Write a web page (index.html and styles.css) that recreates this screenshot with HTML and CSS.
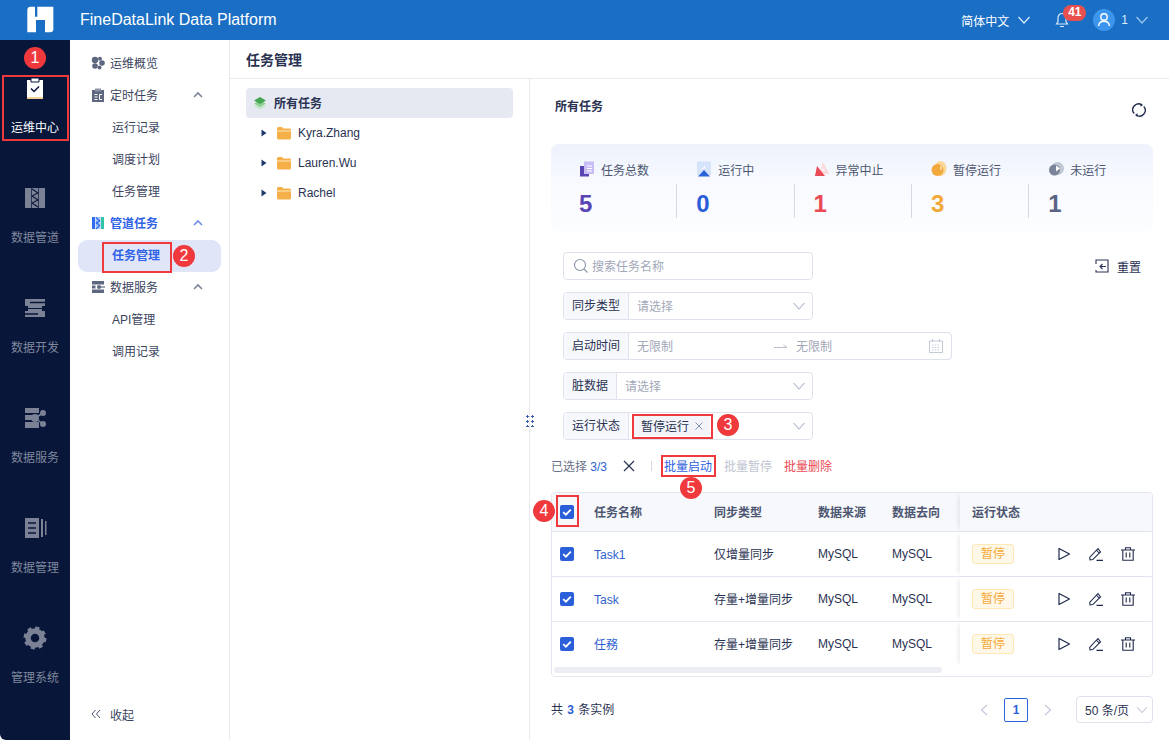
FILE: index.html
```html
<!DOCTYPE html>
<html lang="en">
<head>
    <meta charset="UTF-8">
    <meta name="viewport" content="width=device-width, initial-scale=1.0">
    <title>FineDataLink Data Platform</title>
    <link rel="stylesheet" href="styles.css">
</head>
<body>
    <svg class="defs" width="0" height="0">
        <symbol id="chev" viewBox="0 0 14 14"><path d="M1.500 4l5.500 6 5.500-6" fill="none" stroke="currentColor" stroke-width="1.200"/></symbol>
        <symbol id="up" viewBox="0 0 10 10"><path d="M1 7l4-4 4 4" fill="none" stroke="currentColor" stroke-width="1.600"/></symbol>
        <symbol id="tri" viewBox="0 0 6 8"><path d="M0.500 0.500L5.500 4L0.500 7.500z" fill="currentColor"/></symbol>
        <symbol id="folder" viewBox="0 0 14 14"><path d="M0 2.500C0 1.700.7 1 1.500 1h3.500l1.500 1.500h6c.8 0 1.500.7 1.500 1.500v8c0 .8-.7 1.500-1.500 1.500h-11C.7 13.500 0 12.800 0 12z" fill="#f5b04a"/><path d="M0 5h14" stroke="#ffe7bd" stroke-width="1"/></symbol>
        <symbol id="check" viewBox="0 0 14 14"><rect width="14" height="14" rx="2" fill="#2b5fd9"/><path d="M3.200 7.200l2.700 2.500 4.900-5" fill="none" stroke="#fff" stroke-width="1.800"/></symbol>
        <symbol id="play" viewBox="0 0 14 14"><path d="M2 1.500v11l10.500-5.500z" fill="none" stroke="currentColor" stroke-width="1.200" stroke-linejoin="round"/></symbol>
        <symbol id="edit" viewBox="0 0 14 14"><path d="M.7 10.500L1 13l2.800-.4L11.500 5 9 1.500zM7.500 3.200L10 6M7.500 13.400H14" fill="none" stroke="currentColor" stroke-width="1.100"/></symbol>
        <symbol id="trash" viewBox="0 0 14 14"><path d="M0 3h14M4.500 3V.8h5V3M1.800 3v10.200h10.400V3M5.200 5.500v5M8.800 5.500v5" fill="none" stroke="currentColor" stroke-width="1.100"/></symbol>
    </svg>

    <header class="topbar">
        <div class="logo-cell">
            <svg class="logo" viewBox="0 0 120 120"><path d="M32 20H45V50H52V20H100V88Q100 97 90 97H75V60H48V97H22V30Q22 20 32 20Z" fill="#fff"/></svg>
        </div>
        <div class="brand">FineDataLink Data Platform</div>
        <div class="top-right">
            <span class="lang">简体中文</span>
            <svg class="top-chev"><use href="#chev"/></svg>
            <span class="bell">
                <svg class="bell-icon" viewBox="0 0 16 16"><path d="M8 1.500c-2.600 0-4 2-4 4.300v3.700L2.500 12h11L12 9.500V5.800c0-2.300-1.400-4.300-4-4.300zM6 14.500h4" fill="none" stroke="#d8ecff" stroke-width="1.200"/></svg>
                <span class="bell-count">41</span>
            </span>
            <span class="avatar">
                <svg viewBox="0 0 22 22" width="22" height="22"><circle cx="11" cy="11" r="11" fill="#3d96ee"/><circle cx="11" cy="8" r="3.200" fill="none" stroke="#fff" stroke-width="1.400"/><path d="M5.500 17c.5-3.200 2.500-4.800 5.500-4.800s5 1.600 5.500 4.800" fill="none" stroke="#fff" stroke-width="1.400"/></svg>
            </span>
            <span class="user">1</span>
            <svg class="top-chev dim"><use href="#chev"/></svg>
        </div>
    </header>

    <div class="app">
        <nav class="rail">
            <a class="rail-item active">
                <svg viewBox="0 0 24 24"><path d="M4 4h16v19H4z" fill="#fff"/><path d="M8 2h8v4H8z" fill="#fff" stroke="#08163a" stroke-width="1"/><path d="M4 22h16" stroke="#e9b25c" stroke-width="1.200"/><path d="M8 12.500l3 3 5-5" fill="none" stroke="#08163a" stroke-width="1.500"/></svg>
                <span>运维中心</span>
            </a>
            <a class="rail-item">
                <svg viewBox="0 0 24 24"><path d="M2 2h20v20H2z" fill="#7b8296"/><path d="M8.500 2v20M15.500 2v20" stroke="#08163a" stroke-width=".7"/><path d="M9 3l6 4-6 3 6 4-6 3 6 4" fill="none" stroke="#08163a" stroke-width="1.100"/></svg>
                <span>数据管道</span>
            </a>
            <a class="rail-item">
                <svg viewBox="0 0 24 24"><path d="M2 3h20v7H2zM5 10h14v5H5zM2 15h20v6H2z" fill="#7b8296"/><path d="M7 6.500h15M2 18h13" stroke="#08163a" stroke-width="1.500"/><path d="M5 12.500h14" stroke="#08163a" stroke-width="1"/></svg>
                <span>数据开发</span>
            </a>
            <a class="rail-item">
                <svg viewBox="0 0 24 24"><path d="M2 2h14v5H2zM2 9h7v5H2zM2 16h14v6H2z" fill="#7b8296"/><circle cx="12" cy="12" r="4" fill="#7b8296"/><circle cx="20" cy="7" r="3" fill="#7b8296"/><circle cx="20" cy="18" r="3" fill="#7b8296"/><path d="M12 12l8-5M12 12l8 6" stroke="#7b8296" stroke-width="1.500"/></svg>
                <span>数据服务</span>
            </a>
            <a class="rail-item">
                <svg viewBox="0 0 24 24"><path d="M2 2h14v20H2z" fill="#7b8296"/><path d="M18 3h2v18h-2zM22 5h1.500v14H22z" fill="#7b8296"/><path d="M5 7h8M5 12h8M5 17h8" stroke="#08163a" stroke-width="1.500"/></svg>
                <span>数据管理</span>
            </a>
            <a class="rail-item">
                <svg viewBox="0 0 24 24"><circle cx="12" cy="12" r="7" fill="none" stroke="#7b8296" stroke-width="5.500"/><circle cx="12" cy="12" r="10" fill="none" stroke="#7b8296" stroke-width="3" stroke-dasharray="4 3.850"/></svg>
                <span>管理系统</span>
            </a>
        </nav>

        <aside class="menu">
            <div class="menu-list">
                <div class="menu-row">
                    <svg class="menu-icon" viewBox="0 0 14 14"><circle cx="4" cy="4" r="3.200" fill="#5e6780"/><circle cx="9" cy="2.800" r="2" fill="#5e6780"/><circle cx="11" cy="7" r="2.800" fill="#5e6780"/><circle cx="4" cy="10" r="2.800" fill="#5e6780"/><circle cx="8.500" cy="11.500" r="2" fill="#5e6780"/></svg>
                    <span>运维概览</span>
                </div>
                <div class="menu-row">
                    <svg class="menu-icon" viewBox="0 0 14 14"><path d="M1 2h12v12H1z" fill="#5e6780"/><path d="M4 0.500h6v3H4z" fill="#8d94a8"/><path d="M3.500 6.500h3M3.500 9h3M3.500 11.500h3M8.500 6.500h2.500M8.500 11.500h2.500M8.500 6.500v5" stroke="#fff" stroke-width="1"/></svg>
                    <span>定时任务</span>
                    <svg class="menu-up"><use href="#up"/></svg>
                </div>
                <div class="menu-row sub">运行记录</div>
                <div class="menu-row sub">调度计划</div>
                <div class="menu-row sub">任务管理</div>
                <div class="menu-row current">
                    <svg class="menu-icon" viewBox="0 0 14 14"><path d="M1 1h3v12H1z" fill="#2f6cf0"/><path d="M10 1h3v12h-3z" fill="#2ec4a8"/><path d="M4.500 1h5v12h-5z" fill="#a9c3f7"/><path d="M5 1.500l4 4M9 4L5 8M5 6l4 4M9 9l-4 4" stroke="#2f6cf0" stroke-width="1.100"/></svg>
                    <span>管道任务</span>
                    <svg class="menu-up"><use href="#up"/></svg>
                </div>
                <div class="menu-row sub selected">任务管理</div>
                <div class="menu-row">
                    <svg class="menu-icon" viewBox="0 0 14 14"><path d="M1 1h12v3.500H1zM1 9.500h12V13H1zM1 5.500h3.500v3H1z" fill="#5e6780"/><circle cx="8" cy="7" r="2" fill="#5e6780"/><path d="M9 7h5" stroke="#5e6780" stroke-width="1.200"/></svg>
                    <span>数据服务</span>
                    <svg class="menu-up"><use href="#up"/></svg>
                </div>
                <div class="menu-row sub">API管理</div>
                <div class="menu-row sub">调用记录</div>
            </div>
            <div class="collapse">
                <svg viewBox="0 0 10 10" width="10" height="10"><path d="M4.500 1L1 5l3.500 4M9 1L5.500 5 9 9" fill="none" stroke="#4a5370" stroke-width="1"/></svg>
                <span>收起</span>
            </div>
        </aside>

        <main class="page">
            <div class="page-title">任务管理</div>
            <div class="split">
                <section class="tree">
                    <div class="tree-root">
                        <svg viewBox="0 0 14 14" width="14" height="14"><path d="M7 7l6 3-6 3.500L1 10z" fill="#c4e6c8"/><path d="M7 4.500l6 3-6 3.500-6-3.500z" fill="#8fd098"/><path d="M7 1l6 3.500L7 8 1 4.500z" fill="#45a552"/></svg>
                        <span>所有任务</span>
                    </div>
                    <div class="tree-row"><svg class="tree-tri"><use href="#tri"/></svg><svg class="tree-folder"><use href="#folder"/></svg><span>Kyra.Zhang</span></div>
                    <div class="tree-row"><svg class="tree-tri"><use href="#tri"/></svg><svg class="tree-folder"><use href="#folder"/></svg><span>Lauren.Wu</span></div>
                    <div class="tree-row"><svg class="tree-tri"><use href="#tri"/></svg><svg class="tree-folder"><use href="#folder"/></svg><span>Rachel</span></div>
                </section>

                <section class="detail">
                    <div class="detail-head">
                        <span class="detail-title">所有任务</span>
                        <svg class="refresh" viewBox="0 0 14 14"><path d="M9.500 1.700A5.800 5.800 0 0 0 2.200 10.500M4.500 12.300A5.800 5.800 0 0 0 11.800 3.500" fill="none" stroke="#1f2a4d" stroke-width="1.300"/><path d="M8.500 0l2.500 2-2.500 1.800zM5.500 14L3 12l2.500-1.800z" fill="#1f2a4d"/></svg>
                    </div>

                    <div class="stats">
                        <div class="stat">
                            <div class="stat-label">
                                <svg viewBox="0 0 16 16"><path d="M5 0.500h10v12.500H5z" fill="#c9bdf6"/><path d="M1 5h4v8h5v2.500H1z" fill="#5a45b5"/><path d="M8 5h5M8 7.500h5M8 10h5" stroke="#fff" stroke-width="1"/></svg>
                                <span>任务总数</span>
                            </div>
                            <div class="stat-num purple">5</div>
                        </div>
                        <div class="stat">
                            <div class="stat-label">
                                <svg viewBox="0 0 16 16"><path d="M1 0.500h14v14H1z" fill="#d5e3fb"/><path d="M8 9l6 6.500H2z" fill="#2b64d8"/><path d="M5.500 8l2-.5 1-2.500 .8 2.500" stroke="#fff" stroke-width="1" fill="none"/></svg>
                                <span>运行中</span>
                            </div>
                            <div class="stat-num blue">0</div>
                        </div>
                        <div class="stat">
                            <div class="stat-label">
                                <svg viewBox="0 0 16 16"><path d="M9 1l6.500 12H5z" fill="#fbd9dc"/><path d="M3 5l8 10H1z" fill="#ea4a55"/><path d="M8 7.500l2.500 2.500M10.500 7.500L8 10" stroke="#fff" stroke-width="1"/></svg>
                                <span>异常中止</span>
                            </div>
                            <div class="stat-num red">1</div>
                        </div>
                        <div class="stat">
                            <div class="stat-label">
                                <svg viewBox="0 0 16 16"><ellipse cx="9.500" cy="7.500" rx="6" ry="7.500" fill="#fbd79a"/><circle cx="6.500" cy="9" r="6" fill="#f2a93b"/><path d="M10 5v4" stroke="#fff" stroke-width="1"/></svg>
                                <span>暂停运行</span>
                            </div>
                            <div class="stat-num orange">3</div>
                        </div>
                        <div class="stat">
                            <div class="stat-label">
                                <svg viewBox="0 0 16 16"><circle cx="9.500" cy="7.500" r="6.500" fill="#c0c6d4"/><circle cx="6.500" cy="9" r="5.500" fill="#7c8499"/><path d="M8 4.500l4 3-4 3z" fill="#fff"/></svg>
                                <span>未运行</span>
                            </div>
                            <div class="stat-num slate">1</div>
                        </div>
                    </div>

                    <div class="filters">
                        <div class="filter-top">
                            <div class="field search">
                                <svg viewBox="0 0 16 16" width="16" height="16"><circle cx="7" cy="7" r="5.500" fill="none" stroke="#8a93a8" stroke-width="1.100"/><path d="M11 11l3.500 3.500" stroke="#8a93a8" stroke-width="1.100"/></svg>
                                <span class="ph">搜索任务名称</span>
                            </div>
                            <div class="reset">
                                <svg viewBox="0 0 14 14" width="14" height="14"><path d="M1 5V1h12v12H1v-2M5.500 7.500H11M7.500 5L5 7.500 7.500 10" fill="none" stroke="#2a3252" stroke-width="1.100"/></svg>
                                <span>重置</span>
                            </div>
                        </div>
                        <div class="field">
                            <span class="field-label">同步类型</span>
                            <span class="ph grow">请选择</span>
                            <svg class="field-chev"><use href="#chev"/></svg>
                        </div>
                        <div class="field wide">
                            <span class="field-label">启动时间</span>
                            <span class="ph range-from">无限制</span>
                            <svg class="range-arrow" viewBox="0 0 14 6" width="14" height="6"><path d="M0 4.500h13L9.500 2" fill="none" stroke="#b9bfce" stroke-width="1"/></svg>
                            <span class="ph grow">无限制</span>
                            <svg class="cal" viewBox="0 0 14 14" width="14" height="14"><path d="M.5 2h13v11.500H.5zM3.500 0v3M10.500 0v3" fill="none" stroke="#c3c8d6" stroke-width="1"/><path d="M3 6h8M3 8.500h8M3 11h8" stroke="#c3c8d6" stroke-width="1.200" stroke-dasharray="1.400 1.400"/></svg>
                        </div>
                        <div class="field">
                            <span class="field-label">脏数据</span>
                            <span class="ph grow">请选择</span>
                            <svg class="field-chev"><use href="#chev"/></svg>
                        </div>
                        <div class="field">
                            <span class="field-label">运行状态</span>
                            <span class="grow chip-wrap">
                                <span class="chip"><span class="chip-text">暂停运行</span><svg viewBox="0 0 8 8" width="8" height="8"><path d="M.5.500l7 7M7.500.500l-7 7" stroke="#7f93b5" stroke-width="1"/></svg></span>
                            </span>
                            <svg class="field-chev"><use href="#chev"/></svg>
                        </div>
                    </div>

                    <div class="actions">
                        <span class="picked">已选择 <b>3/3</b></span>
                        <svg class="clear" viewBox="0 0 12 12" width="12" height="12"><path d="M1 1l10 10M11 1L1 11" stroke="#2a3252" stroke-width="1.200"/></svg>
                        <i class="action-sep"></i>
                        <a class="act start">批量启动</a>
                        <a class="act pause">批量暂停</a>
                        <a class="act remove">批量删除</a>
                    </div>

                    <div class="table">
                        <div class="tr th">
                            <span class="td-check"><svg class="box"><use href="#check"/></svg></span>
                            <span class="zh">任务名称</span><span class="zh">同步类型</span><span class="zh">数据来源</span><span class="zh">数据去向</span>
                            <span class="td-status"><span class="zh">运行状态</span></span>
                        </div>
                        <div class="tr">
                            <span class="td-check"><svg class="box"><use href="#check"/></svg></span>
                            <span class="task">Task1</span><span class="zh">仅增量同步</span><span>MySQL</span><span>MySQL</span>
                            <span class="td-status"><em class="tag">暂停</em><span class="ops"><svg><use href="#play"/></svg><svg><use href="#edit"/></svg><svg><use href="#trash"/></svg></span></span>
                        </div>
                        <div class="tr">
                            <span class="td-check"><svg class="box"><use href="#check"/></svg></span>
                            <span class="task">Task</span><span class="zh">存量+增量同步</span><span>MySQL</span><span>MySQL</span>
                            <span class="td-status"><em class="tag">暂停</em><span class="ops"><svg><use href="#play"/></svg><svg><use href="#edit"/></svg><svg><use href="#trash"/></svg></span></span>
                        </div>
                        <div class="tr last">
                            <span class="td-check"><svg class="box"><use href="#check"/></svg></span>
                            <span class="task zh">任務</span><span class="zh">存量+增量同步</span><span>MySQL</span><span>MySQL</span>
                            <span class="td-status"><em class="tag">暂停</em><span class="ops"><svg><use href="#play"/></svg><svg><use href="#edit"/></svg><svg><use href="#trash"/></svg></span></span>
                        </div>
                        <div class="hscroll"><i></i></div>
                    </div>

                    <div class="foot">
                        <span class="zh">共 <b>3</b> 条实例</span>
                        <div class="pager">
                            <svg class="pg-arrow" viewBox="0 0 8 12" width="8" height="12"><path d="M7 1L1.500 6 7 11" fill="none" stroke="#c3c8d6" stroke-width="1.200"/></svg>
                            <span class="pg-num">1</span>
                            <svg class="pg-arrow" viewBox="0 0 8 12" width="8" height="12"><path d="M1 1l5.500 5L1 11" fill="none" stroke="#c3c8d6" stroke-width="1.200"/></svg>
                            <span class="pg-size">50 条/页<svg><use href="#chev"/></svg></span>
                        </div>
                    </div>
                </section>
            </div>
        </main>
    </div>

    <!-- tutorial markup drawn over the screenshot -->
    <div class="grip"></div>
    <i class="mark mark-1"></i>
    <i class="mark mark-2"></i>
    <i class="mark mark-3"></i>
    <i class="mark mark-4"></i>
    <i class="mark mark-5"></i>
    <b class="pin pin-1">1</b>
    <b class="pin pin-2">2</b>
    <b class="pin pin-3">3</b>
    <b class="pin pin-4">4</b>
    <b class="pin pin-5">5</b>
</body>
</html>
```
FILE: styles.css
```css
* {
    box-sizing: border-box;
}

html, body {
    height: 100%;
}

body {
    margin: 0;
    position: relative;
    overflow: hidden;
    background-color: #fff;
    color: #2a3252;
    font-family: "Liberation Sans", "Noto Sans CJK SC", sans-serif;
    font-size: 12px;
}

svg {
    display: block;
    flex: none;
}

.defs {
    position: absolute;
}

/* CJK glyphs sit low in this font stack, lift them a touch */
.zh {
    padding-bottom: 2px;
}

/* top bar */
.topbar {
    height: 40px;
    display: flex;
    align-items: center;
    background-color: #1a6fc4;
    color: #fff;
}

.logo-cell {
    width: 80px;
    height: 40px;
    display: flex;
    align-items: center;
    justify-content: center;
}

.logo {
    width: 40px;
    height: 40px;
}

.brand {
    font-size: 16px;
}

.top-right {
    margin-left: auto;
    display: flex;
    align-items: center;
    padding-right: 20px;
}

.lang {
    font-size: 12px;
}

.top-chev {
    width: 14px;
    height: 14px;
    margin-left: 8px;
    color: #d8ecff;
}

.top-chev.dim {
    margin-left: 7px;
    color: #9cc6ee;
}

.bell {
    position: relative;
    margin-left: 23px;
    width: 16px;
    height: 16px;
}

.bell-icon {
    width: 16px;
    height: 16px;
}

.bell-count {
    position: absolute;
    left: 9px;
    top: -7px;
    width: 23px;
    height: 16px;
    border-radius: 8px;
    background-color: #e8504f;
    color: #fff;
    font-size: 12px;
    font-weight: bold;
    line-height: 15px;
    text-align: center;
}

.avatar {
    margin-left: 23px;
}

.user {
    margin-left: 6px;
    color: #d8ecff;
}

/* page frame */
.app {
    height: 700px;
    display: flex;
}

.rail {
    width: 70px;
    flex: none;
    background-color: #08163a;
    border-bottom-left-radius: 6px;
}

.rail-item {
    height: 110px;
    padding-top: 36px;
    display: flex;
    flex-direction: column;
    align-items: center;
    gap: 20px;
    color: #7f889c;
    line-height: 16px;
}

.rail-item svg {
    width: 24px;
    height: 24px;
}

.rail-item.active {
    color: #fff;
}

.menu {
    width: 160px;
    flex: none;
    display: flex;
    flex-direction: column;
    justify-content: space-between;
    padding: 8px 8px 18px;
    border-right: 1px solid #e8eaf2;
}

.menu-row {
    height: 32px;
    display: flex;
    align-items: center;
    padding-left: 13px;
    padding-bottom: 4px;
    color: #3c4560;
    position: relative;
}

.menu-icon {
    width: 14px;
    height: 14px;
    margin: 2px 5px 0 0;
}

.menu-up {
    position: absolute;
    left: 115px;
    top: 10px;
    width: 10px;
    height: 10px;
    color: #7c8499;
}

.menu-row.sub {
    padding-left: 34px;
}

.menu-row.current {
    color: #2f62e6;
    font-weight: bold;
}

.menu-row.current .menu-up {
    color: #6f8fe6;
}

.menu-row.selected {
    background-color: #e0e6f8;
    border-radius: 9px;
    color: #2f62e6;
    font-weight: bold;
}

.collapse {
    display: flex;
    align-items: center;
    gap: 9px;
    padding-left: 13px;
    height: 16px;
    color: #3c4560;
}

.page {
    flex: 1;
    min-width: 0;
    display: flex;
    flex-direction: column;
}

.page-title {
    height: 39px;
    padding-left: 16px;
    border-bottom: 1px solid #e8eaf0;
    font-size: 14px;
    font-weight: bold;
    line-height: 40px;
}

.split {
    flex: 1;
    display: flex;
    min-height: 0;
}

/* tree */
.tree {
    width: 300px;
    flex: none;
    padding: 9px 16px;
    border-right: 1px solid #e8eaf0;
}

.tree-root {
    height: 30px;
    display: flex;
    align-items: center;
    gap: 7px;
    padding-left: 7px;
    border-radius: 4px;
    background-color: #e6e9f1;
    font-weight: bold;
}

.tree-root span {
    padding-bottom: 2px;
}

.tree-row {
    height: 30px;
    display: flex;
    align-items: center;
    padding-left: 15px;
}

.tree-tri {
    width: 6px;
    height: 8px;
    color: #1f3a6e;
}

.tree-folder {
    width: 14px;
    height: 14px;
    margin-left: 10px;
    margin-right: 7px;
}

/* right side */
.detail {
    flex: 1;
    min-width: 0;
    padding: 0 16px 0 21px;
}

.detail-head {
    height: 65px;
    display: flex;
    justify-content: space-between;
    padding: 21px 7px 0 4px;
}

.detail-title {
    font-weight: bold;
    line-height: 14px;
}

.refresh {
    width: 14px;
    height: 14px;
    margin-top: 3px;
}

.stats {
    height: 88px;
    display: flex;
    padding: 16px 0 0 28px;
    border-radius: 8px;
    background: linear-gradient(180deg, #edf2fc 0%, #f8faff 45%, #fcfdff 100%);
}

.stat {
    width: 117.300px;
    flex: none;
    position: relative;
}

.stat + .stat::before {
    content: "";
    position: absolute;
    left: -20px;
    top: 24px;
    width: 1px;
    height: 34px;
    background-color: #d5d9e3;
}

.stat-label {
    display: flex;
    align-items: center;
    gap: 6px;
    height: 18px;
    color: #4d5670;
}

.stat-label svg {
    width: 16px;
    height: 16px;
}

.stat-num {
    margin-top: 12px;
    font-size: 24px;
    font-weight: bold;
    line-height: 28px;
}

.purple { color: #5a45b5; }
.blue { color: #2b5fd9; }
.red { color: #ea4a55; }
.orange { color: #f2a93b; }
.slate { color: #5a6484; }

.filters {
    margin: 20px 0 0 12px;
    display: flex;
    flex-direction: column;
    gap: 12px;
}

.filter-top {
    display: flex;
    align-items: center;
    justify-content: space-between;
    padding-right: 12px;
}

.field {
    width: 250px;
    height: 28px;
    display: flex;
    align-items: center;
    border: 1px solid #dfe2ec;
    border-radius: 4px;
}

.field.wide {
    width: 389px;
}

.field.search {
    gap: 3px;
    padding-left: 9px;
}

.field-label {
    height: 26px;
    flex: none;
    padding: 0 8px;
    border-right: 1px solid #dfe2ec;
    border-radius: 3px 0 0 3px;
    background-color: #f7f8fc;
    line-height: 27px;
}

.ph {
    color: #a2a8b8;
    padding-bottom: 2px;
}

.grow {
    flex: 1;
}

.field-label + .ph {
    padding-left: 8px;
}

.field-chev {
    width: 14px;
    height: 14px;
    margin-right: 6px;
    color: #c3c8d6;
}

.range-from {
    width: 145px;
}

.range-arrow {
    margin-right: 8px;
}

.cal {
    margin-right: 8px;
}

.chip-wrap {
    padding-left: 4px;
}

.chip {
    height: 20px;
    width: 77px;
    display: inline-flex;
    align-items: center;
    gap: 6px;
    padding-left: 8px;
    border-radius: 2px;
    background-color: #f2f4f9;
}

.chip-text {
    padding-bottom: 2px;
}

.reset {
    display: flex;
    align-items: center;
    gap: 8px;
}

.actions {
    height: 20px;
    margin-top: 16px;
    display: flex;
    align-items: center;
    color: #6a7289;
}

.picked {
    width: 72px;
    padding-bottom: 1px;
}

.picked b {
    font-weight: normal;
    color: #2f5fd0;
}

.action-sep {
    width: 1px;
    height: 10px;
    margin: 0 12px 0 16px;
    background-color: #d5d9e3;
}

.act {
    margin-right: 12px;
    padding-bottom: 2px;
}

.start { color: #2f5fe0; }
.pause { color: #c0c5d1; }
.remove { color: #ea4a55; }

/* table */
.table {
    height: 185px;
    margin-top: 16px;
    border: 1px solid #e4e7f0;
    border-radius: 4px;
}

.tr {
    height: 45px;
    display: grid;
    grid-template-columns: 42px 120px 104px 74px 68px 1fr;
    align-items: center;
    border-bottom: 1px solid #e4e7f0;
}

.tr.th {
    height: 39px;
    background-color: #f7f8fc;
    border-radius: 3px 3px 0 0;
    color: #4d5670;
    font-weight: bold;
}

.tr.last {
    border-bottom: 0;
    height: 44px;
}

.td-check {
    padding-left: 8px;
}

.box {
    width: 14px;
    height: 14px;
}

.task {
    color: #2f5fd0;
    padding-top: 2px;
}

.task.zh {
    padding-top: 0;
}

.td-status {
    height: 100%;
    display: flex;
    align-items: center;
    justify-content: space-between;
    padding: 0 17px 0 12px;
    box-shadow: -4px 0 5px -3px rgba(40, 50, 90, 0.12);
}

.tag {
    width: 42px;
    height: 20px;
    border: 1px solid #ffe7b6;
    border-radius: 3px;
    background-color: #fff8e8;
    color: #f5a93a;
    font-style: normal;
    line-height: 18px;
    text-align: center;
}

.ops {
    display: flex;
    gap: 18px;
    color: #1f2a4d;
}

.ops svg {
    width: 14px;
    height: 14px;
}

.hscroll {
    height: 9px;
    padding: 1px 2px;
}

.hscroll i {
    display: block;
    width: 388px;
    height: 6px;
    border-radius: 3px;
    background-color: #eceef3;
}

.foot {
    margin-top: 19px;
    height: 27px;
    display: flex;
    align-items: center;
    justify-content: space-between;
}

.foot b {
    margin: 0 1px;
    color: #2f5fd0;
}

.pager {
    display: flex;
    align-items: center;
}

.pg-num {
    width: 24px;
    height: 24px;
    margin: 0 16px;
    border: 1px solid #2f62d8;
    border-radius: 2px;
    color: #2f62d8;
    font-weight: bold;
    line-height: 22px;
    text-align: center;
}

.pg-size {
    width: 77px;
    height: 27px;
    margin-left: 24px;
    display: flex;
    align-items: center;
    justify-content: space-between;
    padding: 0 4px 0 8px;
    border: 1px solid #dfe2ec;
    border-radius: 4px;
}

.pg-size svg {
    width: 12px;
    height: 12px;
    color: #c3c8d6;
}

/* annotations over the screenshot */
.grip {
    position: absolute;
    left: 525px;
    top: 414px;
    width: 9px;
    height: 13px;
    background-image: radial-gradient(circle, #3a5fa8 1px, transparent 1.2px);
    background-size: 5px 5px;
}

.mark {
    position: absolute;
    border: 2px solid #f0393c;
}

.mark-1 { left: 2px; top: 75px; width: 67px; height: 66px; }
.mark-2 { left: 102px; top: 242px; width: 70px; height: 31px; }
.mark-3 { left: 632px; top: 414px; width: 81px; height: 25px; }
.mark-4 { left: 556px; top: 495px; width: 23px; height: 32px; }
.mark-5 { left: 661px; top: 455px; width: 55px; height: 22px; }

.pin {
    position: absolute;
    width: 22px;
    height: 22px;
    border-radius: 50%;
    background-color: #f0393c;
    color: #fff;
    font-size: 16px;
    font-weight: normal;
    line-height: 22px;
    text-align: center;
}

.pin-1 { left: 24px; top: 47px; }
.pin-2 { left: 173px; top: 245px; }
.pin-3 { left: 717px; top: 414px; }
.pin-4 { left: 533px; top: 500px; }
.pin-5 { left: 680px; top: 477px; }
```
